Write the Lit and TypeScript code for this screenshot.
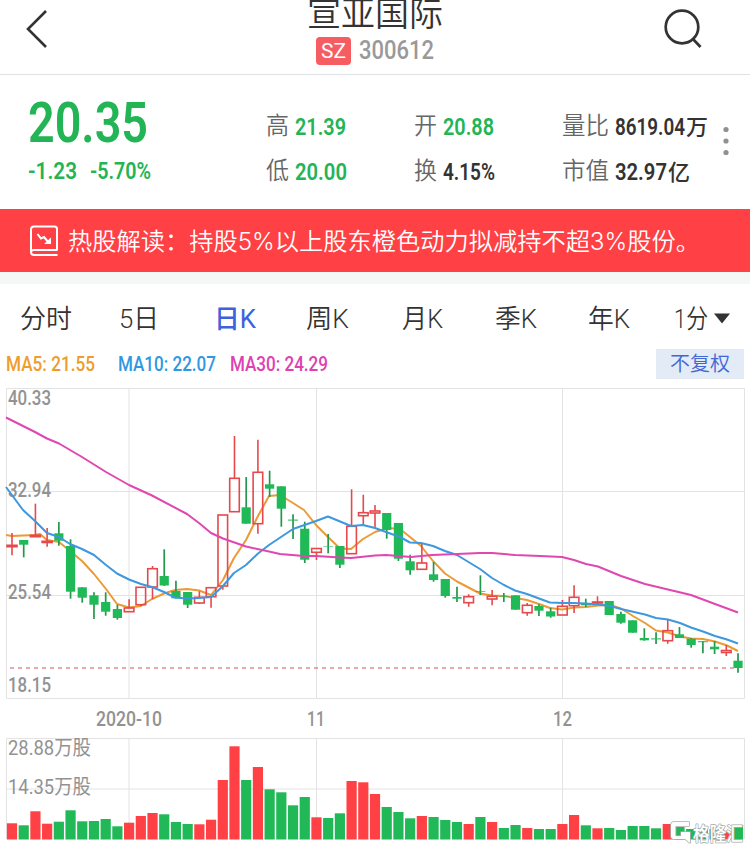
import { LitElement, html, css, svg } from "lit";
import { customElement } from "lit/decorators.js";

type Candle = [up: number, top: number, bottom: number, high: number, low: number];

const PITCH = 11.71;
const FIRST_X = 12;

const candles: Candle[] = [
  [1, 545.3, 546.7, 533, 555.3], [0, 540, 544.7, 540, 557.3], [1, 535.3, 536.7, 503.7, 536],
  [1, 541.3, 542.5, 528, 546.7], [0, 533.3, 540.7, 522, 545.7], [0, 546, 591.7, 539.3, 598.7],
  [0, 587.3, 597.7, 587.3, 602.7], [0, 595.3, 604.7, 592.3, 619], [0, 602, 611.7, 592.3, 615.7],
  [0, 609, 618, 604.7, 619.7], [1, 608, 611.7, 599.3, 611.7], [1, 587.3, 604.7, 587.3, 606],
  [1, 568.7, 587, 566, 599], [0, 576, 585.5, 549.3, 586], [0, 591, 598.3, 580.7, 598.3],
  [0, 592, 604.7, 592, 608], [1, 597.3, 603, 591.3, 604], [1, 587.7, 596.7, 587, 607.7],
  [1, 515, 586, 515, 589.7], [1, 478.3, 511.7, 436, 511.7], [0, 507.3, 523.7, 477, 523.7],
  [1, 472.3, 523.7, 439.7, 533.7], [0, 484.3, 488.7, 470.7, 497], [0, 486.3, 508.7, 486.3, 526.7],
  [0, 519.6, 520.6, 514.3, 539], [0, 528.7, 559.7, 521.7, 563], [1, 548.5, 552.3, 548.3, 560],
  [0, 546.2, 546.7, 534, 553.3], [0, 546, 564.7, 546, 568], [1, 526.3, 553.7, 489.3, 553.7],
  [1, 512.7, 515.7, 494.7, 525.3], [1, 511, 513, 505, 527], [0, 513, 530, 513, 538.7],
  [0, 523, 558.7, 523, 561], [0, 561.3, 570.3, 554.7, 574.7], [1, 563, 569.3, 544, 569.3],
  [0, 574.3, 580, 562, 581.7], [0, 579, 596, 579, 597.7], [0, 597, 598.7, 586.7, 602],
  [1, 596.7, 602.7, 594.3, 606.7], [0, 591.2, 591.9, 575.3, 595], [1, 596.3, 599, 590, 605.3],
  [0, 596.4, 597, 593, 602], [0, 595.3, 609.7, 595.3, 609.7], [1, 605.3, 612.7, 603, 615.7],
  [0, 606, 610.7, 604.3, 616], [0, 611.3, 616.5, 607.7, 617.7], [1, 606.3, 615, 600, 615],
  [1, 597.3, 605.7, 585.3, 613], [0, 603.7, 605.3, 598.7, 607], [1, 602, 603, 596.3, 605],
  [0, 601, 615, 601, 615], [0, 614, 622.7, 611.7, 623.7], [0, 620.3, 632.7, 620.3, 632.7],
  [0, 638, 640.3, 628.3, 640.7], [0, 638.4, 639.4, 632.3, 644], [1, 630.7, 640.7, 619, 643.7],
  [0, 634.3, 638, 627, 638], [0, 638.7, 645, 638, 647.7], [0, 641.2, 642.2, 641, 653.3],
  [0, 646.7, 649.3, 641, 654], [1, 650.5, 652.5, 645, 656], [0, 660.7, 668, 653.3, 672.7],
];

const volumeTops = [
  823.3, 825.3, 811.3, 823.7, 821.7, 810.3, 821.3, 821, 819, 826.3, 822.7, 816, 813, 814.3, 822, 824,
  824.3, 819.7, 780, 746.3, 780, 767, 789.3, 792.3, 805.3, 797, 817.3, 818, 813.3, 781, 782.3, 794,
  807, 812, 818.3, 816, 817, 820, 822, 824, 817, 822, 828, 825, 828, 829, 829, 824, 815, 825.3,
  828.3, 828, 830, 826, 826, 828.3, 824, 827, 829, 828, 829, 832, 825,
];

const ma30 = "6,417.5 35,432 47,438.5 59,443.5 82,457 106,472 129,485 152,495.5 187,514 199,523 211,533 223,538.5 246,546.5 269,551.5 280,554 304,556 316,556 340,557.5 351,558 375,555.5 386,555 411,557 432,555 457,554 480,553 492,553 515,555 540,556 562,557 574,560 586,564 598,566.5 621,576 645,584 668,589.5 691,595 715,604 738,612.5";
const ma10 = "6,487 23,510 35,521 47,533 59,537 70,544 82,549 94,555 106,565 117,573.5 129,579.5 141,584 152,587 164,592 175,597.5 187,598.5 199,598 211,597 223,586 234,573 246,565 258,553.5 269,545 293,529 316,521 328,516.5 351,526 363,525 375,528 386,532 400,537 410,542.5 421,543 433,546 445,551 457,555 480,569 492,578 504,585 515,590.5 527,594 539,598.5 550,602.5 562,603 574,603 586,603.5 598,604.5 610,606 621,609 645,614.5 656,618 668,619.5 680,623 691,627.5 703,631.5 715,636 727,639.5 738,643.5";
const ma5 = "6,535 12,536 35,535 40,534 47,540 59,542 70,551 82,561 94,574 106,589 117,604 129,607.5 141,606 152,599 164,593.5 175,590 187,589 199,590.5 211,595 223,580 234,558 246,540 258,516 269,496 280,495 293,503 304,510 316,525 328,537 340,548.5 351,549 363,539 375,532 388,528 400,529 410,537 421,546 433,561 445,573.5 457,581.5 480,593.5 492,595.5 504,596 527,600 539,604 550,608 562,609.5 574,607.5 586,607 598,605.5 610,605 621,608.5 633,616 645,623 656,630.5 668,632.5 680,636.5 691,638.5 703,639 715,641.5 727,645.5 738,651";

/** Text condensed or stretched to an exact width; the baseline sits at 80% of the box height. */
const fit = (text: string, width: number, height: number, cls: string) => html`<svg
  class="fit ${cls}" width=${width} height=${height}>
  <text x="0" y=${height * 0.8} textLength=${width} lengthAdjust="spacingAndGlyphs">${text}</text>
</svg>`;

const label = (text: string, x: number, y: number, width: number, cls = "") => svg`<text
  class="axis ${cls}" x=${x} y=${y} textLength=${width} lengthAdjust="spacingAndGlyphs">${text}</text>`;

const drawCandle = ([up, top, bottom, high, low]: Candle, i: number) => {
  const x = FIRST_X + i * PITCH;
  const flat = bottom - top < 1.6;
  if (up && !flat) {
    return svg`<g class="up">
      <path d="M${x} ${high}V${top}M${x} ${bottom}V${low}"/>
      <rect x=${x - 4.8} y=${top} width="9.6" height=${bottom - top}/></g>`;
  }
  return svg`<g class=${up ? "up solid" : "down"}>
    <path d="M${x} ${high}V${low}"/>
    <rect x=${x - (flat ? 5 : 4.6)} y=${top} width=${flat ? 10 : 9.2} height=${bottom - top}/></g>`;
};

@customElement("app-root")
export class AppRoot extends LitElement {
  static styles = css`
    :host { display: flex; flex-direction: column; width: 750px; height: 851px; overflow: hidden;
      background: #fff; color: #333; font-family: Roboto, "Noto Sans CJK SC", sans-serif; }
    svg { display: block; flex: none; }
    .fit { overflow: visible; fill: currentColor; }
    header { display: grid; grid-template-columns: 100px 1fr 100px; height: 74px; box-sizing: content-box;
      border-bottom: 1px solid #dfe3e5; }
    .back { padding: 9px 0 0 25px; }
    .search { padding: 9px 0 0 13px; }
    .heading { display: flex; flex-direction: column; align-items: center; }
    .title { font-size: 34px; font-weight: 350; margin-top: -6px; }
    .code { display: flex; align-items: center; gap: 8px; margin-top: 3px; }
    .badge { background: #f65d63; border-radius: 4px; width: 35px; height: 28px; display: flex;
      align-items: center; justify-content: center; color: #fff; }
    .sz { font-size: 20.5px; margin-top: 3px; }
    .num { color: #999; font-size: 26px; font-weight: 500; margin-top: 1px; }
    .quote { display: grid; grid-template-columns: 238px 148px 148px 157px 1fr; height: 134px; padding-left: 28px; }
    .col { display: flex; flex-direction: column; gap: 16px; padding-top: 37px; }
    .pair { display: flex; gap: 6px; height: 29px; }
    .green { color: #23b455; }
    .first { display: flex; flex-direction: column; padding-top: 21px; gap: 14px; }
    .price { font-size: 56px; font-weight: 600; }
    .deltas { display: flex; gap: 13px; }
    .v { font-size: 23.5px; font-weight: 600; margin-top: -0.5px; }
    .k { font-size: 23.5px; font-weight: 350; color: #666; }
    .cn { font-size: 22px; font-weight: 500; }
    .val { display: flex; gap: 1px; }
    .more { padding-top: 50px; }
    .news { background: #ff4044; height: 63px; display: flex; align-items: center; color: #fff; padding-left: 29px; gap: 9px; }
    .news .t { font-size: 24.2px; font-weight: 350; font-family: Inter, "Noto Sans CJK SC", sans-serif; }
    .gap { height: 12px; background: #f5f6f6; }
    nav { display: flex; height: 65px; padding: 20px 0 0 20px; box-sizing: border-box; }
    nav .tab { font-size: 26px; font-weight: 350; }
    .active { color: #3c63db; }
    nav .active .tab { font-weight: 450; }
    .cell { display: flex; gap: 5px; }
    .legend { display: flex; height: 39px; padding-left: 6px; box-sizing: border-box; }
    .ma { font-size: 20px; font-weight: 500; margin-top: 3px; }
    .o { color: #ee9d2d; margin-right: 23px; }
    .b { color: #3197df; margin-right: 14px; }
    .m { color: #dd42b0; margin-right: 328px; }
    .adj { background: #e2ebf6; color: #4167d5; width: 88px; height: 30px; display: flex; align-items: center; justify-content: center; }
    .adj .a { font-size: 20px; font-weight: 350; margin-top: 3px; }
    .grid { stroke: #e3e3e3; stroke-width: 1; fill: none; }
    .axis { font-size: 20px; fill: #929292; font-weight: 500; }
    .axis.vol { font-weight: 400; }
    .up path, .up rect { fill: none; stroke: #e6484c; stroke-width: 1.6; }
    .down path { stroke: #23974b; stroke-width: 1.7; }
    .down rect { fill: #1fb957; }
    .up.solid rect, .vup { fill: #ff4044; }
    .vdown { fill: #21b857; }
    .line { fill: none; stroke-width: 2; stroke-linejoin: round; }
    .l30 { stroke: #df48b0; } .l10 { stroke: #3d98df; } .l5 { stroke: #eb9a35; }
    .last { stroke: #df8c90; stroke-width: 1.5; stroke-dasharray: 4 4; }
    .mark { fill: #fff; stroke: #aaa; stroke-width: 1.6; paint-order: stroke; stroke-linejoin: round; }
    .brand { font-size: 19px; font-weight: 500; }
  `;

  private pair(key: string, keyWidth: number, value: string, width: number, cls = "", unit = "") {
    return html`<div class="pair">
      ${fit(key, keyWidth, 28, "k")}
      <div class="val ${cls}">${fit(value, width, 29, "v")}${unit ? fit(unit, 22, 28.5, "cn") : ""}</div>
    </div>`;
  }

  private tab(text: string, width: number, advance: number, active = false, menu = false) {
    return html`<div class="cell ${active ? "active" : ""}" style="width:${advance}px">
      ${fit(text, width, 30, "tab")}
      ${menu ? html`<svg width="18" height="30"><path d="M1 9.500H17L9 19.500Z" fill="#333"/></svg>` : ""}
    </div>`;
  }

  render() {
    return html`
      <header>
        <div class="back"><svg width="24" height="40" fill="none" stroke="#333" stroke-width="2.6">
          <path d="M21 2 3 20 21 38"/></svg></div>
        <div class="heading">
          ${fit("宣亚国际", 136, 40, "title")}
          <div class="code"><div class="badge">${fit("SZ", 25, 18, "sz")}</div>${fit("300612", 75, 23.5, "num")}</div>
        </div>
        <div class="search"><svg width="40" height="42" fill="none" stroke="#333" stroke-width="2.7">
          <circle cx="19" cy="18" r="16.3"/><path d="M29.5 29.5 37.5 38"/></svg></div>
      </header>
      <section class="quote">
        <div class="first">
          ${fit("20.35", 120, 58, "price green")}
          <div class="deltas">${fit("-1.23", 49, 13.5, "v green")}${fit("-5.70%", 61, 13.5, "v green")}</div>
        </div>
        <div class="col">${this.pair("高", 23, "21.39", 51, "green")}${this.pair("低", 23, "20.00", 52, "green")}</div>
        <div class="col">${this.pair("开", 23, "20.88", 51, "green")}${this.pair("换", 23, "4.15%", 52)}</div>
        <div class="col">${this.pair("量比", 47, "8619.04", 70, "", "万")}${this.pair("市值", 47, "32.97", 52, "", "亿")}</div>
        <div class="more"><svg width="14" height="34" fill="#909090">
          <circle cx="7" cy="4.500" r="2.6"/><circle cx="7" cy="16" r="2.6"/><circle cx="7" cy="27.500" r="2.6"/></svg></div>
      </section>
      <section class="news">
        <svg width="30" height="32" fill="none" stroke="#fff" stroke-width="2">
          <path d="M28 25V4Q28 1.500 25.500 1.500H5Q2 1.500 2 4.500V27Q2 30 5 30H28.500M2 27Q2 25 5 25H28.500"/>
          <path d="M8.500 9 12 13.500 15 12 20 18" /><path d="M22 12.500V19H15Z" fill="#fff" stroke="none"/></svg>
        ${fit("热股解读：持股5%以上股东橙色动力拟减持不超3%股份。", 632, 31, "t")}
      </section>
      <div class="gap"></div>
      <nav>
        ${this.tab("分时", 52, 99)}${this.tab("5日", 40, 95)}${this.tab("日K", 42, 92, true)}
        ${this.tab("周K", 43, 96)}${this.tab("月K", 41, 93)}${this.tab("季K", 42, 93)}
        ${this.tab("年K", 42, 86)}${this.tab("1分", 34, 60, false, true)}
      </nav>
      <section class="legend">
        ${fit("MA5: 21.55", 89, 24, "ma o")}${fit("MA10: 22.07", 98, 24, "ma b")}${fit("MA30: 24.29", 98, 24, "ma m")}
        <div class="adj">${fit("不复权", 60, 18.5, "a")}</div>
      </section>
      <svg width="750" height="463" viewBox="0 388 750 463">
        <path class="grid" d="M6.500 388.500H744.500V698.500H6.500ZM6 491.500H744M6 595.500H744M129 388V698M316.500 388V698M562.500 388V698"/>
        <path class="grid" d="M6.500 839V738.500H744.500V839M6 789H744M129 738V839M316.500 738V839M562.500 738V839"/>
        ${label("40.33", 8, 405, 43)}${label("32.94", 8, 497, 43)}${label("25.54", 8, 599, 43)}${label("18.15", 8, 692, 43)}
        ${label("2020-10", 96, 726, 66)}${label("11", 307, 726, 18)}${label("12", 553, 726, 19)}
        ${volumeTops.map((y, i) => svg`<rect class=${candles[i][0] ? "vup" : "vdown"}
          x=${FIRST_X + i * PITCH - 5.1} y=${y} width="10.2" height=${839.5 - y}/>`)}
        ${label("28.88万股", 8, 755, 83, "vol")}${label("14.35万股", 8, 794, 83, "vol")}
        <polyline class="line l5" points=${ma5}/>
        ${candles.map(drawCandle)}
        <polyline class="line l10" points=${ma10}/>
        <polyline class="line l30" points=${ma30}/>
        <path class="last" d="M10 668H736"/>
        <path class="mark" d="M674 822H689V826H675.500V836H681V832H690V843L685 839H674Q671 839 671 836V825Q671 822 674 822Z"/>
        <text class="mark brand" x="693" y="841" textLength="50" lengthAdjust="spacingAndGlyphs">格隆汇</text>
      </svg>
    `;
  }
}
